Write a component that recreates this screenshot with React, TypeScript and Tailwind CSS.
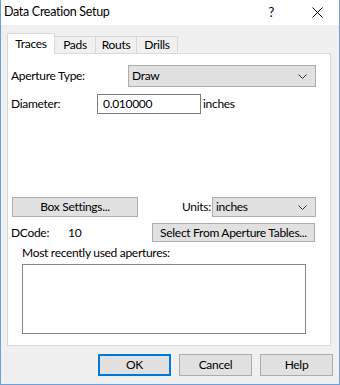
import React from 'react'

const font = { fontFamily: 'Lato, "Noto Sans", sans-serif' }

function Chevron() {
  return (
    <svg width="9" height="5" viewBox="0 0 9 5" className="shrink-0">
      <path d="M0.5 0.5 L4.5 4.5 L8.5 0.5" fill="none" stroke="#333" strokeWidth="1" />
    </svg>
  )
}

function Combo({ value, className }: { value: string; className: string }) {
  return (
    <div
      className={`flex items-center justify-between bg-[#e1e1e1] border border-[#adadad] pl-[3px] pr-[8px] ${className}`}
    >
      <span>{value}</span>
      <Chevron />
    </div>
  )
}

function Btn({ label, className }: { label: string; className: string }) {
  return (
    <div
      className={`flex items-center justify-center whitespace-nowrap bg-[#e1e1e1] border border-[#adadad] ${className}`}
    >
      {label}
    </div>
  )
}

export default function App() {
  const tabs = ['Pads', 'Routs', 'Drills']

  return (
    <div
      className="w-[340px] h-[385px] flex flex-col border-x border-b border-[#6ca0d8] text-[12px] tracking-[-0.3px] text-black leading-none bg-[#f0f0f0] whitespace-nowrap"
      style={font}
    >
      {/* title bar */}
      <div className="h-[25px] bg-white flex items-center justify-between pl-[3px] pr-[16px] shrink-0">
        <span className="text-[12.5px]">Data Creation Setup</span>
        <div className="flex items-center gap-[38px]">
          <span className="text-[13px]">?</span>
          <svg width="11" height="11" viewBox="0 0 11 11">
            <path d="M0.5 0.5 L10.5 10.5 M10.5 0.5 L0.5 10.5" stroke="#000" strokeWidth="1" />
          </svg>
        </div>
      </div>

      {/* tabs */}
      <div className="flex items-end pl-[6px] pt-[8px] h-[28px] shrink-0">
        <div className="relative z-10 w-[48px] h-[21px] bg-white border border-b-0 border-[#d9d9d9] flex items-center justify-center -mb-[1px]">
          Traces
        </div>
        {tabs.map((t) => (
          <div
            key={t}
            className="w-[41px] h-[17px] border border-l-0 border-b-0 border-[#d9d9d9] bg-[#f0f0f0] flex items-center justify-center"
          >
            {t}
          </div>
        ))}
      </div>

      {/* panel */}
      <div className="ml-[6px] w-[324px] h-[293px] bg-white border border-[#d9d9d9] flex flex-col shrink-0">
        <div className="flex items-center mt-[11px] h-[22px]">
          <span className="ml-[3px] w-[117px]">Aperture Type:</span>
          <Combo value="Draw" className="w-[188px] h-[22px]" />
        </div>

        <div className="flex items-center mt-[7px] h-[20px]">
          <span className="ml-[3px] w-[86px]">Diameter:</span>
          <div className="w-[104px] h-[20px] border border-[#7a7a7a] bg-white flex items-center pl-[5px]">
            0.010000
          </div>
          <span className="ml-[2px]">inches</span>
        </div>

        <div className="flex items-center mt-[83px] h-[20px]">
          <Btn label="Box Settings..." className="ml-[4px] w-[126px] h-[20px]" />
          <span className="ml-[44px] w-[30px]">Units:</span>
          <Combo value="inches" className="w-[104px] h-[20px]" />
        </div>

        <div className="flex items-center mt-[6px] h-[19px]">
          <span className="ml-[3px] w-[57px]">DCode:</span>
          <span className="w-[84px]">10</span>
          <Btn label="Select From Aperture Tables..." className="w-[163px] h-[19px]" />
        </div>

        <span className="ml-[14px] mt-[5px]">Most recently used apertures:</span>

        <div className="ml-[14px] mt-[5px] w-[284px] h-[70px] border border-[#828790] bg-white" />
      </div>

      {/* footer buttons */}
      <div className="flex justify-end gap-[8px] pr-[6px] mt-[8px]">
        <div className="w-[73px] h-[22px] flex items-center justify-center bg-[#e1e1e1] border-2 border-[#0078d7]">
          OK
        </div>
        <Btn label="Cancel" className="w-[73px] h-[22px]" />
        <Btn label="Help" className="w-[73px] h-[22px]" />
      </div>
    </div>
  )
}
